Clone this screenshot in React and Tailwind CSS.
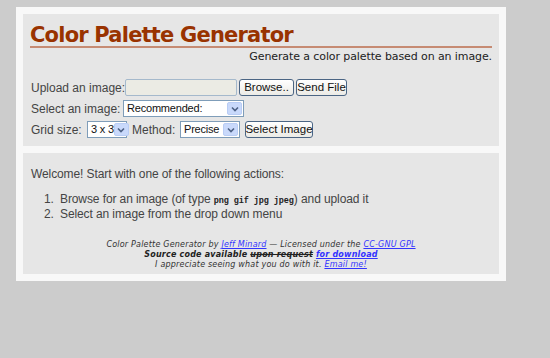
import React from 'react';

const Chevron = () => (
  <span className="flex h-full w-[15px] shrink-0 items-center justify-center rounded-[2px] border border-[#b9cdf5] bg-[#c9d9fb]">
    <svg width="8" height="6" viewBox="0 0 8 6">
      <path d="M1 1.5 L4 4.5 L7 1.5" fill="none" stroke="#4d6185" strokeWidth="1.6" />
    </svg>
  </span>
);

const FakeSelect = ({ value, width }) => (
  <div className={`flex h-[17px] shrink-0 items-center justify-between border border-[#7f9db9] bg-white p-[1px] ${width}`}>
    <span className="whitespace-nowrap pl-[2px] text-[11px] leading-none tracking-[-0.2px] text-[#111]">{value}</span>
    <Chevron />
  </div>
);

const Btn = ({ children, width }) => (
  <button className={`flex h-[17px] shrink-0 items-center justify-center whitespace-nowrap rounded-[3px] border border-[#4b6584] bg-gradient-to-b from-white to-[#ecebe6] text-[11.5px] leading-none text-[#111] ${width}`}>
    {children}
  </button>
);

const App = () => {
  return (
    <div className="min-h-[358px] bg-[#cccccc] pt-[7px] pl-[16px]" style={{ fontFamily: '"Liberation Sans", Arial, sans-serif' }}>
      <div className="flex w-[490px] flex-col gap-[7px] bg-[#f8f8f8] p-[7px]">
        {/* header + form */}
        <div className="h-[132px] bg-[#e6e6e6] px-[7px] pt-[10px]">
          <h1
            className="border-b-2 border-[#c68b73] text-[21px] font-bold leading-[22px] tracking-[-0.8px] text-[#993300]"
            style={{ fontFamily: '"DejaVu Sans", Verdana, sans-serif' }}
          >
            Color Palette Generator
          </h1>
          <p
            className="mt-[2px] text-right text-[11px] leading-[13px] tracking-[-0.1px] text-[#222]"
            style={{ fontFamily: '"DejaVu Sans", Verdana, sans-serif' }}
          >
            Generate a color palette based on an image.
          </p>

          <div className="mt-[16px] flex flex-col gap-[4px] whitespace-nowrap text-[12px] text-[#444]">
            <div className="flex h-[17px] items-center">
              <span className="w-[95px] shrink-0 pl-[1px]">Upload an image:</span>
              <div className="h-[17px] w-[112px] shrink-0 rounded-[2px] border border-[#a5b9cc] bg-[#ebebe4]" />
              <div className="ml-[2px] flex gap-[2px]">
                <Btn width="w-[55px]">Browse..</Btn>
                <Btn width="w-[51px]">Send File</Btn>
              </div>
            </div>
            <div className="flex h-[17px] items-center">
              <span className="w-[93px] shrink-0 pl-[1px]">Select an image:</span>
              <FakeSelect value="Recommended:" width="w-[121px]" />
            </div>
            <div className="flex h-[17px] items-center">
              <span className="w-[57px] shrink-0 pl-[1px]">Grid size:</span>
              <FakeSelect value="3 x 3" width="w-[40px]" />
              <span className="ml-[5px] w-[48px] shrink-0">Method:</span>
              <FakeSelect value="Precise" width="w-[60px]" />
              <div className="ml-[5px]">
                <Btn width="w-[68px]">Select Image</Btn>
              </div>
            </div>
          </div>
        </div>

        {/* welcome */}
        <div className="h-[121px] bg-[#e6e6e6] px-[8px] pt-[14px] text-[12px] tracking-[-0.1px] text-[#444]">
          <p className="leading-[14px]">Welcome! Start with one of the following actions:</p>
          <ol className="mt-[12px] pl-[13px] leading-[13px]">
            <li className="flex">
              <span className="w-[16px]">1.</span>
              <span>
                Browse for an image (of type{' '}
                <code className="text-[8.5px] font-bold text-[#222]" style={{ fontFamily: '"Liberation Mono", "Courier New", monospace' }}>
                  png gif jpg jpeg
                </code>
                ) and upload it
              </span>
            </li>
            <li className="flex">
              <span className="w-[16px]">2.</span>
              <span>Select an image from the drop down menu</span>
            </li>
          </ol>

          <div
            className="mt-[19px] text-center text-[8px] italic leading-[10px] tracking-[0.2px] text-[#333]"
            style={{ fontFamily: '"DejaVu Sans", Verdana, sans-serif' }}
          >
            <p>
              Color Palette Generator by <a className="text-[#3333ff] underline">Jeff Minard</a> — Licensed under the{' '}
              <a className="text-[#3333ff] underline">CC-GNU GPL</a>
            </p>
            <p className="font-bold text-[#222]">
              Source code available <s>upon request</s> <a className="text-[#3333ff] underline">for download</a>
            </p>
            <p>
              I appreciate seeing what you do with it. <a className="text-[#3333ff] underline">Email me!</a>
            </p>
          </div>
        </div>
      </div>
    </div>
  );
};

export default App;
